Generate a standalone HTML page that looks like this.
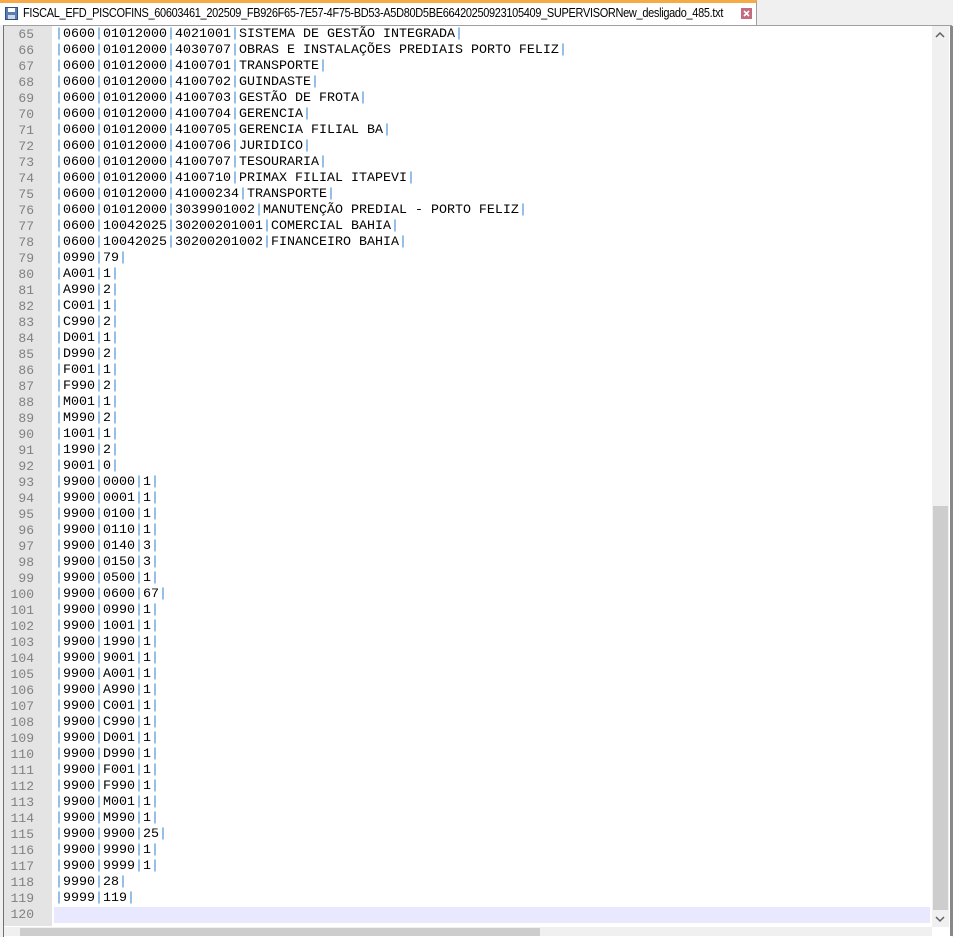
<!DOCTYPE html><html><head><meta charset="utf-8"><style>
body{margin:0;width:953px;height:936px;background:#f0f0f0;position:relative;overflow:hidden;font-family:"Liberation Sans",sans-serif}
.tab{position:absolute;left:0;top:0;width:757px;height:25px;background:#fff;border-right:1px solid #a0a0a0;border-top:3px solid #f5a947;box-sizing:border-box}
.tab span{position:absolute;left:23px;top:3px;font-size:12.5px;color:#000;white-space:nowrap;letter-spacing:-0.35px;transform:scaleX(0.877);transform-origin:0 0}
.ed{position:absolute;left:3px;top:25px;width:948px;height:911px;background:#fff;border-top:1px solid #a0a0a0;border-left:1px solid #707070}
.gut{position:absolute;left:4px;top:26px;width:48px;height:900px;background:#e4e4e4}
.code{position:absolute;left:0;top:27px;font-family:"Liberation Mono",monospace;font-size:13.33px;line-height:16px;white-space:pre}
.l{height:16px;position:relative}
.n{position:absolute;left:0;width:34px;text-align:right;color:#808080;font-size:13px}
.t{position:absolute;left:55px;color:#000}
.t b{font-weight:normal;color:#3a8ad6}
.cur{position:absolute;left:54px;top:907px;width:876px;height:16px;background:#e8e8ff}
.vs{position:absolute;left:932px;top:26px;width:17px;height:901px;background:#f0f0f0}
.thumb{position:absolute;left:933px;top:506px;width:15px;height:404px;background:#cdcdcd}
.hs{position:absolute;left:4px;top:927px;width:928px;height:9px;background:#f0f0f0}
.hthumb{position:absolute;left:20px;top:928px;width:520px;height:8px;background:#cdcdcd}
.rb{position:absolute;left:950px;top:26px;width:3px;height:910px;background:#888}
</style></head><body>
<div class="tab"><svg style="position:absolute;left:5px;top:4px" width="13" height="13"><rect x="0.5" y="0.5" width="12" height="12" fill="#5b7fb4" stroke="#2d4f80"/><rect x="3" y="1" width="7" height="4" fill="#fff"/><rect x="3" y="8" width="7" height="4" fill="#cfd8e6"/></svg><span>FISCAL_EFD_PISCOFINS_60603461_202509_FB926F65-7E57-4F75-BD53-A5D80D5BE66420250923105409_SUPERVISORNew_desligado_485.txt</span><svg style="position:absolute;left:741px;top:5px" width="11" height="11"><rect width="11" height="11" fill="#c46b80"/><path d="M3 3L8 8M8 3L3 8" stroke="#fff" stroke-width="1.6"/></svg></div>
<div class="ed"></div><div class="gut"></div><div class="cur"></div>
<div class="code" id="c"></div>
<div class="vs"></div><div class="thumb"></div>
<svg style="position:absolute;left:935px;top:31px" width="10" height="8"><path d="M1 6L5 2L9 6" stroke="#606060" stroke-width="1.5" fill="none"/></svg>
<svg style="position:absolute;left:935px;top:915px" width="10" height="8"><path d="M1 2L5 6L9 2" stroke="#606060" stroke-width="1.5" fill="none"/></svg>
<div class="hs"></div><div class="hthumb"></div><div class="rb"></div>
<script>
var L=["|0600|01012000|4021001|SISTEMA DE GESTÃO INTEGRADA|","|0600|01012000|4030707|OBRAS E INSTALAÇÕES PREDIAIS PORTO FELIZ|","|0600|01012000|4100701|TRANSPORTE|","|0600|01012000|4100702|GUINDASTE|","|0600|01012000|4100703|GESTÃO DE FROTA|","|0600|01012000|4100704|GERENCIA|","|0600|01012000|4100705|GERENCIA FILIAL BA|","|0600|01012000|4100706|JURIDICO|","|0600|01012000|4100707|TESOURARIA|","|0600|01012000|4100710|PRIMAX FILIAL ITAPEVI|","|0600|01012000|41000234|TRANSPORTE|","|0600|01012000|3039901002|MANUTENÇÃO PREDIAL - PORTO FELIZ|","|0600|10042025|30200201001|COMERCIAL BAHIA|","|0600|10042025|30200201002|FINANCEIRO BAHIA|","|0990|79|","|A001|1|","|A990|2|","|C001|1|","|C990|2|","|D001|1|","|D990|2|","|F001|1|","|F990|2|","|M001|1|","|M990|2|","|1001|1|","|1990|2|","|9001|0|","|9900|0000|1|","|9900|0001|1|","|9900|0100|1|","|9900|0110|1|","|9900|0140|3|","|9900|0150|3|","|9900|0500|1|","|9900|0600|67|","|9900|0990|1|","|9900|1001|1|","|9900|1990|1|","|9900|9001|1|","|9900|A001|1|","|9900|A990|1|","|9900|C001|1|","|9900|C990|1|","|9900|D001|1|","|9900|D990|1|","|9900|F001|1|","|9900|F990|1|","|9900|M001|1|","|9900|M990|1|","|9900|9900|25|","|9900|9990|1|","|9900|9999|1|","|9990|28|","|9999|119|",""];
var h="";L.forEach(function(s,i){h+='<div class="l"><span class="n">'+(65+i)+'</span><span class="t">'+s.replace(/\|/g,'<b>|</b>')+'</span></div>'});
document.getElementById('c').innerHTML=h;
</script></body></html>
